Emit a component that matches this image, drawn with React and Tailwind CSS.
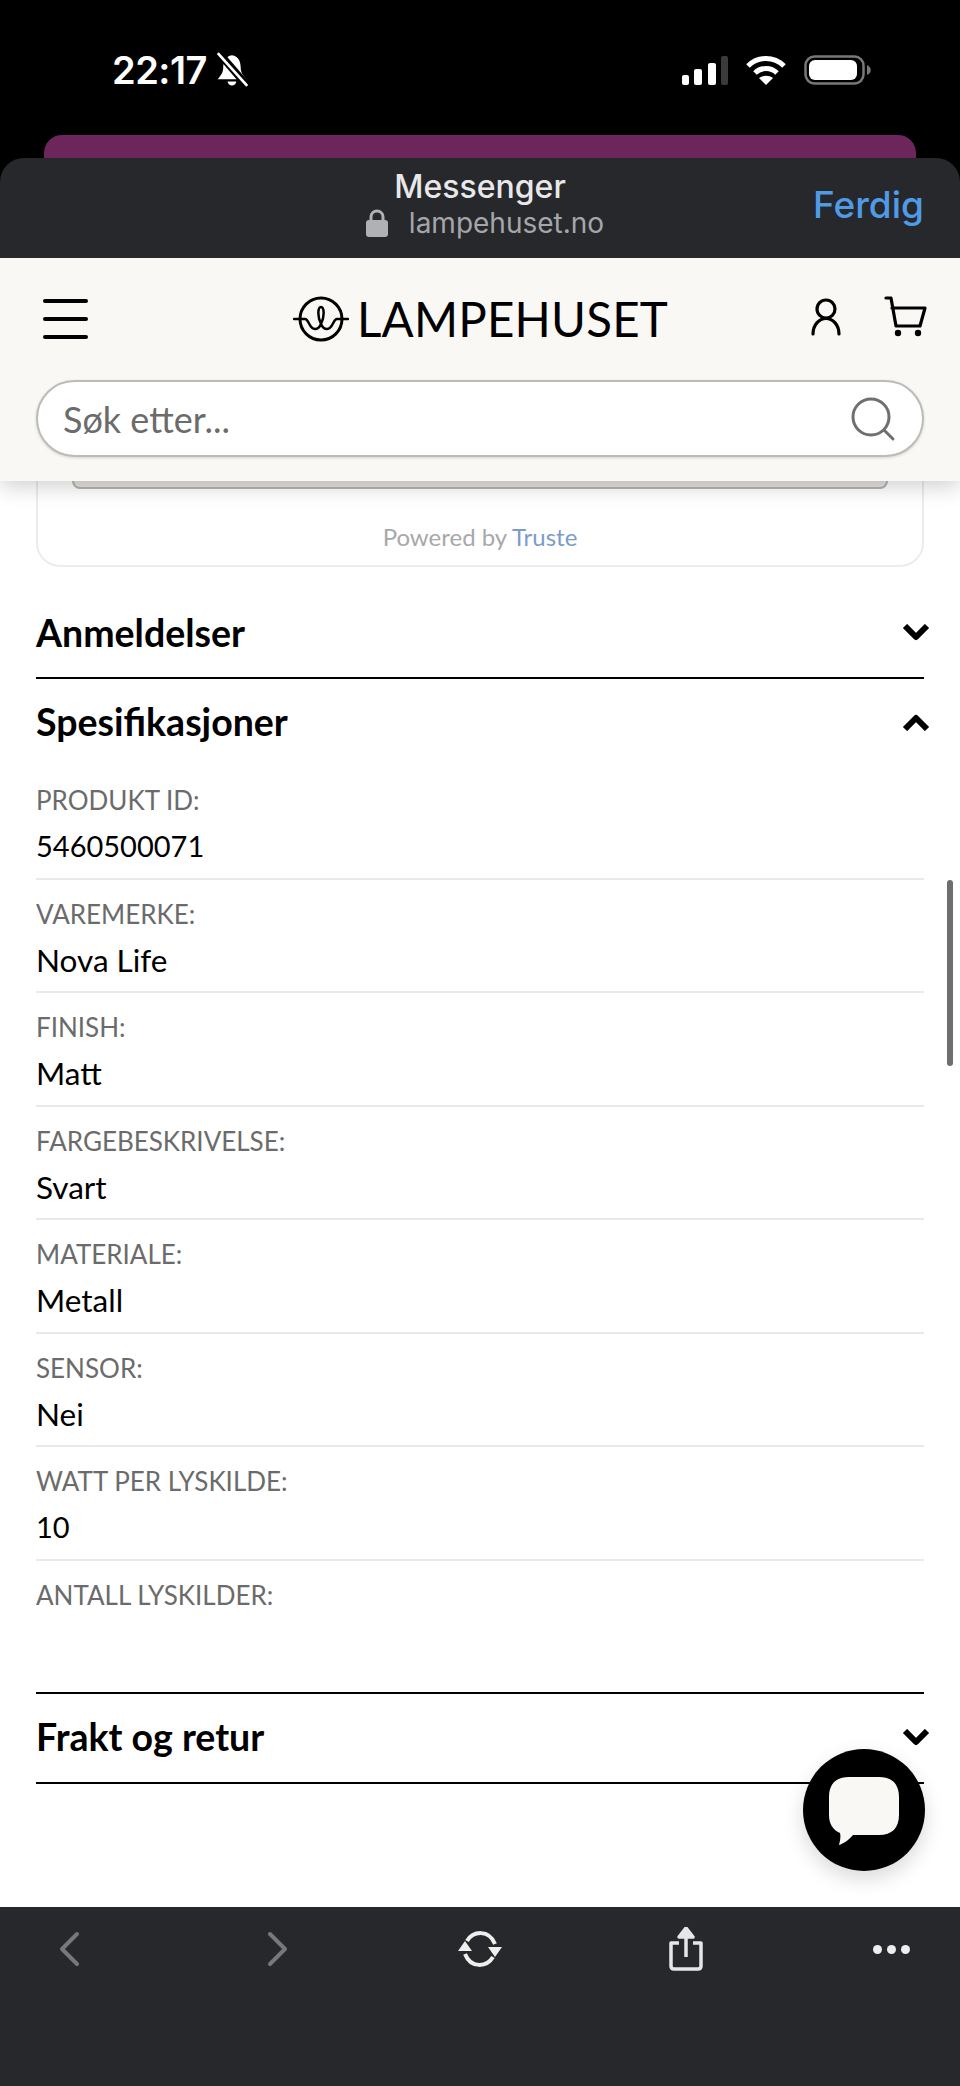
const specs = [
  { label: "PRODUKT ID:", value: "5460500071", num: true },
  { label: "VAREMERKE:", value: "Nova Life" },
  { label: "FINISH:", value: "Matt" },
  { label: "FARGEBESKRIVELSE:", value: "Svart" },
  { label: "MATERIALE:", value: "Metall" },
  { label: "SENSOR:", value: "Nei" },
  { label: "WATT PER LYSKILDE:", value: "10", num: true },
]

const Chevron = ({ up }) => (
  <svg width="28" height="18" viewBox="0 0 28 18" fill="none" stroke="#000" strokeWidth="6" strokeLinejoin="round" className="mr-[-6px]">
    <path d={up ? "M3 16 L14 5 L25 16" : "M3 2 L14 13 L25 2"} />
  </svg>
)

const Logo = () => (
  <svg width="56" height="46" viewBox="0 0 56 46" fill="none" stroke="#000" strokeWidth="2.5">
    <circle cx="28" cy="23" r="21" strokeWidth="3" />
    <path d="M1 23 H12 C16 23 16 33 22 33 C26 33 28 28 28 28 C24 20 25 11 28 11 C31 11 32 20 28 28 C28 28 30 33 34 33 C40 33 40 23 44 23 H55" strokeLinecap="round" />
  </svg>
)

const StatusBar = () => (
  <div className="flex items-center justify-between h-[135px] pt-[5px] pl-[112px] pr-[88px] text-white font-['Inter',sans-serif]">
    <div className="flex items-center gap-[8px]">
      <span className="text-[38px] leading-none font-semibold tracking-[-0.5px]">22:17</span>
      <svg width="35" height="36" viewBox="0 0 31 33" fill="#fff">
        <path d="M15 3 C9 4 7 9 7 14 C7 19 5 21 2 25 H28 C25 21 23 19 23 14 C23 9 21 4 15 3Z" />
        <path d="M11 27 H19 C18.5 32 11.5 32 11 27Z" />
        <path d="M3 1 L29 31" stroke="#000" strokeWidth="7" />
        <path d="M2 1 L29 31" stroke="#fff" strokeWidth="2.5" />
      </svg>
    </div>
    <div className="flex items-center gap-[17px]">
      <svg width="46" height="29" viewBox="0 0 46 29">
        <rect x="0" y="19" width="7" height="10" rx="2" fill="#fff" />
        <rect x="12" y="13" width="8" height="16" rx="2" fill="#fff" />
        <rect x="26" y="7" width="8" height="22" rx="2" fill="#fff" />
        <rect x="39" y="0" width="7" height="29" rx="2" fill="#3a3a3c" />
      </svg>
      <svg width="42" height="30" viewBox="0 0 42 30" fill="none" stroke="#fff" strokeWidth="5">
        <path d="M3 11 C13 1 29 1 39 11" />
        <path d="M10 18 C16 12 26 12 32 18" />
        <path d="M21 30 L14 23 C18 20 24 20 28 23 Z" fill="#fff" strokeWidth="0" />
      </svg>
      <svg width="68" height="30" viewBox="0 0 68 30">
        <rect x="1.5" y="1.5" width="58" height="27" rx="9" fill="none" stroke="#77787a" strokeWidth="2.5" />
        <rect x="5" y="5" width="48" height="20" rx="6" fill="#fff" />
        <path d="M63 10 C68 12 68 18 63 20 Z" fill="#77787a" />
      </svg>
    </div>
  </div>
)

const BrowserTop = () => (
  <div className="relative z-20 mt-[-1px] bg-[#27282b] rounded-t-[24px] h-[100px] flex flex-col items-center pt-[11px] font-['Inter',sans-serif]">
    <div className="text-[32px] leading-[36px] font-medium text-[#e8e8ea]">Messenger</div>
    <div className="flex items-center gap-[21px] mt-[1px] ml-[10px]">
      <svg width="22" height="28" viewBox="0 0 22 28">
        <path d="M5 12 V8 C5 0 17 0 17 8 V12" fill="none" stroke="#b0b1b5" strokeWidth="3" />
        <rect x="0" y="11" width="22" height="17" rx="3" fill="#b0b1b5" />
      </svg>
      <span className="text-[28px] leading-[34px] text-[#a5a6aa]">lampehuset.no</span>
    </div>
    <div className="absolute right-[36px] top-[27px] text-[37px] leading-[40px] font-medium text-[#4f9be8]">Ferdig</div>
  </div>
)

const Header = () => (
  <div className="relative z-10 bg-[#faf8f5] h-[223px] px-[36px] shadow-[0_6px_20px_rgba(0,0,0,0.18)]">
    <div className="flex items-center h-[122px]">
      <div className="flex flex-col gap-[14px] w-[45px] ml-[7px]">
        <div className="h-[4px] bg-black rounded-sm" />
        <div className="h-[4px] bg-black rounded-sm" />
        <div className="h-[4px] bg-black rounded-sm" />
      </div>
      <div className="flex items-center gap-[8px] ml-[205px]">
        <Logo />
        <span className="text-[47.5px] leading-none text-black tracking-[0.2px]">LAMPEHUSET</span>
      </div>
      <div className="flex items-center gap-[42px] ml-auto mt-[-4px] mr-[-4px]">
        <svg width="32" height="40" viewBox="0 0 32 40" fill="none" stroke="#000" strokeWidth="3.2" strokeLinecap="round">
          <circle cx="16" cy="12" r="9" />
          <path d="M3 37 C3 28 9 21.5 16 21.5 C23 21.5 29 28 29 37" />
        </svg>
        <svg width="44" height="44" viewBox="0 0 44 44" fill="none" stroke="#000" strokeWidth="3.2" strokeLinecap="round" strokeLinejoin="round">
          <path d="M2 3 H7 L12 31 H36 L41 13 H8" />
          <circle cx="14" cy="38" r="3.2" fill="#000" stroke="none" />
          <circle cx="34" cy="38" r="3.2" fill="#000" stroke="none" />
        </svg>
      </div>
    </div>
    <div className="flex items-center justify-between h-[77px] bg-white rounded-full border-2 border-[#bdbbb8] shadow-[0_1px_3px_rgba(0,0,0,0.15)] pl-[25px] pr-[26px]">
      <span className="text-[36px] text-[#6b6b6b]">Søk etter...</span>
      <svg width="46" height="46" viewBox="0 0 46 46" fill="none" stroke="#6f6f6f" strokeWidth="3" strokeLinecap="round">
        <circle cx="21" cy="21" r="18" />
        <path d="M34 34 L43 43" />
      </svg>
    </div>
  </div>
)

const Section = ({ title, up, className = "h-[88px]" }) => (
  <div className={`flex items-center justify-between ${className}`}>
    <span className="text-[37.5px] font-bold text-black">{title}</span>
    <Chevron up={up} />
  </div>
)

const App = () => {
  return (
    <div className="relative w-[960px] h-[2086px] overflow-hidden flex flex-col bg-black font-['Lato',sans-serif]">
      <StatusBar />
      <div className="mx-[44px] h-[24px] bg-[#6d265c] rounded-t-[18px]" />
      <BrowserTop />
      <Header />

      <div className="flex-1 bg-white px-[36px]">
        <div className="h-[86px] border-2 border-t-0 border-[#ececec] rounded-b-[24px] flex flex-col items-center">
          <div className="w-[816px] h-[8px] bg-[#e6e3df] border-b-2 border-x-2 border-[#b5b3b0] rounded-b-[12px]" />
          <div className="mt-[35px] text-[24px] leading-[26px] text-[#a8a8a8]">
            Powered by <span className="text-[#7d9bcb]">Truste</span>
          </div>
        </div>

        <div className="mt-[22px] border-b-2 border-black">
          <Section title="Anmeldelser" />
        </div>
        <Section title="Spesifikasjoner" up className="h-[86px]" />

        <div className="mt-[1px]">
          {specs.map((s, i) => (
            <div key={i} className="h-[113.5px] pt-[18px] border-b-2 border-[#e9e9e9]">
              <div className="text-[26px] leading-[32px] text-[#6b6b6b]">{s.label}</div>
              <div className={s.num ? "mt-[13px] text-[29px] leading-[34px] text-black" : "mt-[13px] text-[31.5px] leading-[34px] text-black"}>{s.value}</div>
            </div>
          ))}
          <div className="h-[131px] pt-[18px] text-[26px] leading-[32px] text-[#6b6b6b]">ANTALL LYSKILDER:</div>
        </div>

        <div className="border-y-2 border-black">
          <Section title="Frakt og retur" />
        </div>
      </div>

      <div className="h-[179px] bg-[#27282b]">
        <div className="flex items-center justify-between h-[84px] px-[39px]">
          <div className="flex justify-center w-[60px]">
            <svg width="24" height="36" viewBox="0 0 24 36" fill="none" stroke="#77787b" strokeWidth="4" strokeLinecap="round" strokeLinejoin="round">
              <path d="M20 3 L5 18 L20 33" />
            </svg>
          </div>
          <div className="flex justify-center w-[60px]">
            <svg width="24" height="36" viewBox="0 0 24 36" fill="none" stroke="#77787b" strokeWidth="4" strokeLinecap="round" strokeLinejoin="round" className="ml-[6px]">
              <path d="M4 3 L19 18 L4 33" />
            </svg>
          </div>
          <div className="flex justify-center w-[60px]">
            <svg width="44" height="38" viewBox="0 0 44 38" fill="none" stroke="#eeeeef" strokeWidth="4">
              <path d="M9 11 C15 1 31 -1 37 14" />
              <path d="M35 27 C29 37 13 39 7 24" />
              <path d="M30 17 H44 L37 27 Z M0 21 H14 L7 11 Z" fill="#eeeeef" strokeWidth="0" />
            </svg>
          </div>
          <div className="flex justify-center w-[60px]">
            <svg width="36" height="44" viewBox="0 0 36 44" fill="none" stroke="#e6e6e8" strokeWidth="3.5" strokeLinejoin="round">
              <path d="M11 16 H3 V39 Q3 42 6 42 H30 Q33 42 33 39 V16 H25" />
              <path d="M18 30 V6" />
              <path d="M11 10 L18 1 L25 10 Z" fill="#e6e6e8" />
            </svg>
          </div>
          <div className="flex justify-center gap-[5px] w-[60px]">
            <div className="w-[9px] h-[9px] rounded-full bg-[#eeeeef]" />
            <div className="w-[9px] h-[9px] rounded-full bg-[#eeeeef]" />
            <div className="w-[9px] h-[9px] rounded-full bg-[#eeeeef]" />
          </div>
        </div>
      </div>

      {/* scrollbar */}
      <div className="absolute left-[947px] top-[880px] w-[6px] h-[186px] rounded-full bg-[#6e6e6e]" />

      {/* chat button */}
      <div className="absolute left-[803px] top-[1749px] w-[122px] h-[122px] rounded-full bg-black flex items-center justify-center shadow-[0_8px_20px_rgba(0,0,0,0.15)]">
        <svg width="70" height="68" viewBox="0 0 70 68" className="mt-[2px]">
          <path d="M20 0 H50 C63 0 70 7 70 20 V38 C70 51 63 58 50 58 H24 C21 62 14 67 10 68 C11 64 12 60 11 56 C4 53 0 47 0 38 V20 C0 7 7 0 20 0Z" fill="#faf8f5" />
        </svg>
      </div>
    </div>
  )
}

export default App
